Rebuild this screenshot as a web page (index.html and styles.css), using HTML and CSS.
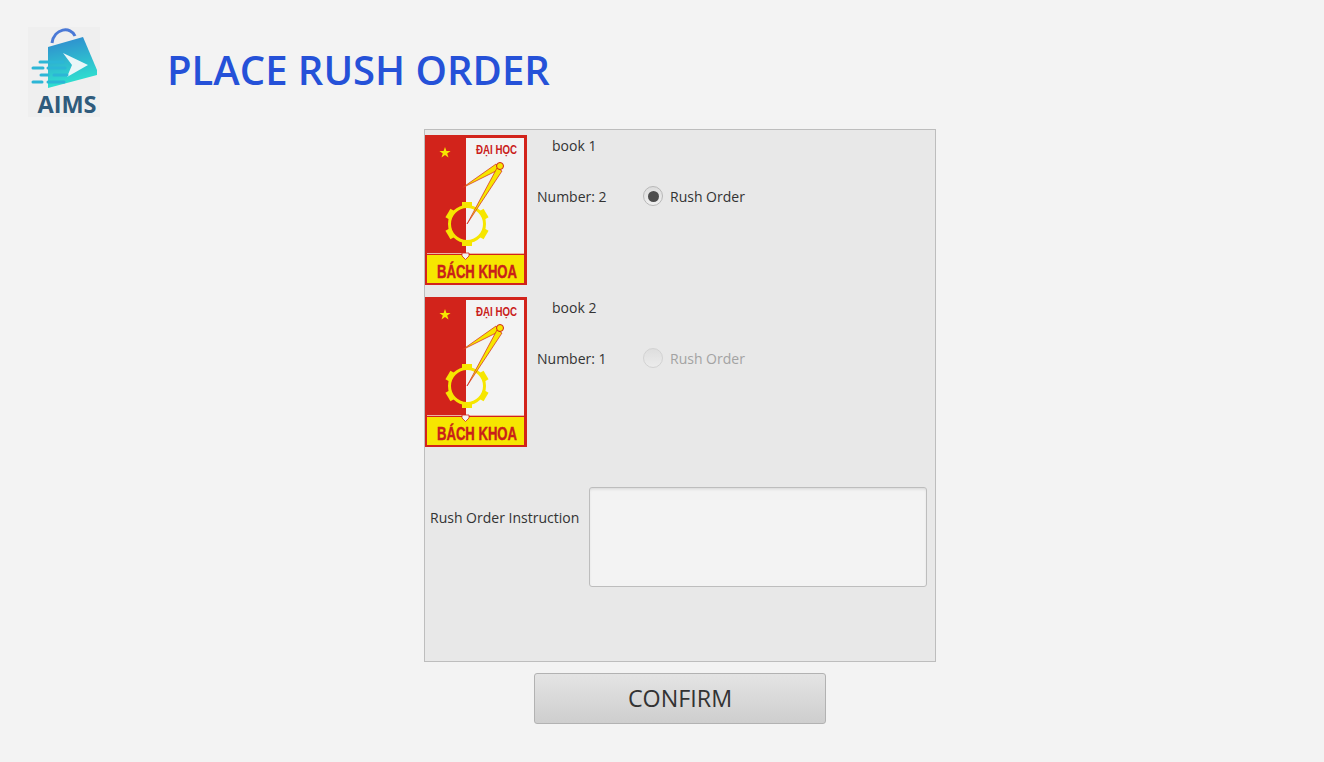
FILE: index.html
```html
<!DOCTYPE html>
<html lang="en">
<head>
  <meta charset="UTF-8" />
  <meta name="viewport" content="width=device-width, initial-scale=1.0" />
  <title>Place Rush Order</title>
  <link rel="stylesheet" href="styles.css">
</head>
<body>
  <svg class="defs" width="0" height="0">
    <defs>
      <linearGradient id="bagFill" x1="0" y1="0" x2="0.2" y2="1">
        <stop offset="0" stop-color="#2f86cf" />
        <stop offset="1" stop-color="#2fe3cf" />
      </linearGradient>
      <symbol id="hustLogo" viewBox="0 0 102 150">
        <rect width="102" height="150" fill="#d2231b" />
        <rect x="41" y="3" width="58" height="115" fill="#f3f3f3" />
        <rect x="2" y="120" width="97" height="28" fill="#f6e600" />
        <path d="M2 118.500H99" stroke="#f3d8c8" stroke-width="0.800" />
        <path d="M37 118h7v3l-3.500 3.500-3.500-3.500z" fill="#f3f3f3" stroke="#d2231b" stroke-width="0.800" />
        <path d="M20 12l1.400 4h4.200l-3.400 2.500 1.300 4-3.500-2.500-3.500 2.500 1.300-4-3.400-2.500h4.200z" fill="#f6e600" />
        <text class="logo-top" x="51" y="19" textLength="41" lengthAdjust="spacingAndGlyphs">ĐẠI HỌC</text>
        <circle cx="42" cy="89" r="17.500" fill="none" stroke="#f6e600" stroke-width="3" />
        <rect x="37" y="67" width="10" height="5" fill="#f6e600" />
        <rect x="37" y="67" width="10" height="5" fill="#f6e600" transform="rotate(60 42 89)" />
        <rect x="37" y="67" width="10" height="5" fill="#f6e600" transform="rotate(120 42 89)" />
        <rect x="37" y="67" width="10" height="5" fill="#f6e600" transform="rotate(180 42 89)" />
        <rect x="37" y="67" width="10" height="5" fill="#f6e600" transform="rotate(240 42 89)" />
        <rect x="37" y="67" width="10" height="5" fill="#f6e600" transform="rotate(300 42 89)" />
        <path d="M37 53L71 29L75 34z" fill="#f6e600" stroke="#d2231b" stroke-width="0.700" stroke-linejoin="round" />
        <path d="M42 89L72 33L77 36z" fill="#f6e600" stroke="#d2231b" stroke-width="0.700" stroke-linejoin="round" />
        <circle cx="75" cy="31" r="3.500" fill="#f6e600" stroke="#d2231b" stroke-width="1" />
        <text class="logo-bottom" x="12" y="142.500" textLength="80" lengthAdjust="spacingAndGlyphs">BÁCH KHOA</text>
      </symbol>
    </defs>
  </svg>

  <header class="top">
    <div class="logo">
      <svg width="72" height="96" viewBox="0 0 72 96">
        <path d="M24 16C26 1 43 -1 47 9" fill="none" stroke="#4a79d6" stroke-width="3" />
        <path d="M20 20L55 10L69 43V48L20 61Z" fill="url(#bagFill)" />
        <path d="M35 26L60 38L39 50L44 38Z" fill="#eaf6f8" />
        <path d="M12 35H35M5 41H15M20 41H37M13 48H20M26 48H39M5 55H14M20 55H36" stroke="#2cb6d6" stroke-width="3" stroke-linecap="round" />
        <text class="logo-name" x="39" y="86" text-anchor="middle">AIMS</text>
      </svg>
    </div>
    <h1>PLACE RUSH ORDER</h1>
  </header>

  <main class="content">
    <section class="panel">
      <div class="item">
        <svg class="cover" width="102" height="150"><use href="#hustLogo" /></svg>
        <div class="item-info">
          <p class="item-name">book 1</p>
          <div class="item-row">
            <span class="item-number">Number: 2</span>
            <label class="radio">
              <span class="radio-dot checked"></span>
              Rush Order
            </label>
          </div>
        </div>
      </div>

      <div class="item">
        <svg class="cover" width="102" height="150"><use href="#hustLogo" /></svg>
        <div class="item-info">
          <p class="item-name">book 2</p>
          <div class="item-row">
            <span class="item-number">Number: 1</span>
            <label class="radio disabled">
              <span class="radio-dot"></span>
              Rush Order
            </label>
          </div>
        </div>
      </div>

      <div class="instruction">
        <label class="instruction-label">Rush Order Instruction</label>
        <div class="textarea"></div>
      </div>
    </section>

    <button class="confirm">CONFIRM</button>
  </main>
</body>
</html>
```

FILE: styles.css
```css
html, body { height: 100%; }
body { margin: 0; background: #f3f3f3; color: #333; font-family: "Open Sans", "Noto Sans", sans-serif; font-size: 14px; overflow: hidden; }
.defs { display: block; height: 0; }

.top { display: flex; align-items: center; height: 90px; padding: 27px 0 0 28px; }
.logo { width: 72px; height: 90px; background: #efefef; }
.logo svg { display: block; }
.logo-name { font-family: "Open Sans", sans-serif; font-weight: 700; font-size: 23.500px; fill: #2f5b7c; }
h1 { margin: 0 0 6px 67px; font-size: 40px; font-weight: 600; color: #2551d8; white-space: nowrap; }

.content { display: flex; flex-direction: column; margin: 12px 0 0 424px; width: 512px; }
.panel { box-sizing: border-box; height: 533px; padding-top: 5px; background: #e8e8e8; border: 1px solid #bdbdbd; }

.item { display: flex; margin-bottom: 12px; }
.cover { display: block; flex: none; }
.logo-top { font-family: "Liberation Sans", sans-serif; font-size: 13px; font-weight: 700; fill: #c9201a; }
.logo-bottom { font-family: "Liberation Sans", sans-serif; font-size: 18px; font-weight: 700; fill: #c9201a; stroke: #c9201a; stroke-width: 0.400px; }
.item-info { padding-left: 10px; }
.item-name { margin: 1px 0 0 15px; line-height: 20px; }
.item-row { display: flex; align-items: center; margin-top: 30px; height: 20px; }
.item-number { width: 106px; }
.radio { display: flex; align-items: center; gap: 7px; }
.radio-dot { box-sizing: border-box; display: flex; align-items: center; justify-content: center; width: 20px; height: 20px; border: 1px solid #b8b8b8; border-radius: 50%; background: linear-gradient(#dcdcdc, #f0f0f0); }
.radio-dot.checked::after { content: ""; width: 11px; height: 11px; border-radius: 50%; background: #4d4d4d; }
.radio.disabled { color: #a3a3a3; }
.radio.disabled .radio-dot { border-color: #d2d2d2; background: linear-gradient(#dedede, #ececec); }

.instruction { display: flex; margin-top: 40px; padding-left: 5px; }
.instruction-label { width: 159px; margin-top: 21px; line-height: 20px; white-space: nowrap; }
.textarea { box-sizing: border-box; width: 338px; height: 100px; background: #f3f3f3; border: 1px solid #bdbdbd; border-radius: 3px; box-shadow: inset 0 2px 3px -1px #d5d5d5; }

.confirm { align-self: center; box-sizing: border-box; width: 292px; height: 51px; margin-top: 11px; padding-bottom: 3px; background: linear-gradient(#e4e4e4, #cecece); border: 1px solid #b2b2b2; border-radius: 3px; color: #333; font-family: "Open Sans", sans-serif; font-size: 23.300px; }
```
